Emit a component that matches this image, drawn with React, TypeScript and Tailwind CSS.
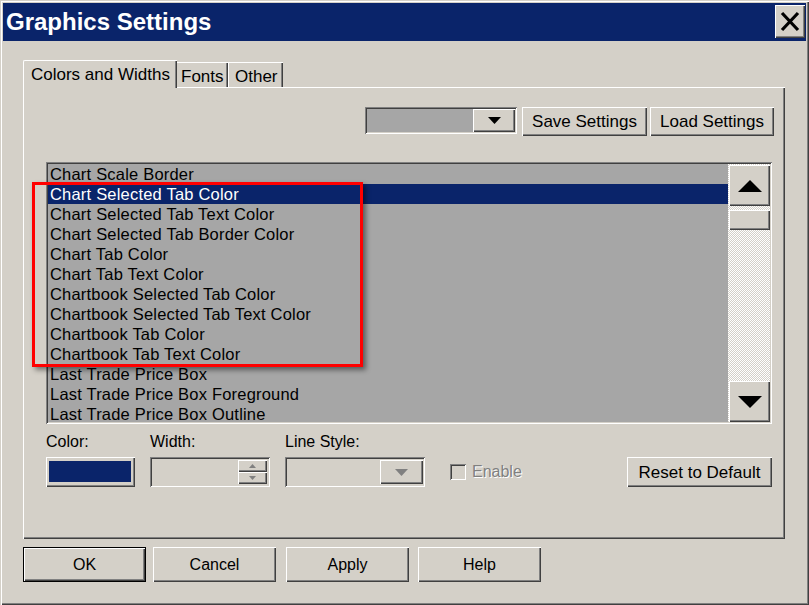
import React from "react";

const raised =
  "shadow-[inset_1px_1px_#ffffff,inset_-1px_-1px_#404040,inset_-2px_-2px_#808080]";
const sunken =
  "shadow-[inset_1px_1px_#808080,inset_-1px_-1px_#ffffff,inset_2px_2px_#404040,inset_-2px_-2px_#d4d0c8]";

const items = [
  "Chart Scale Border",
  "Chart Selected Tab Color",
  "Chart Selected Tab Text Color",
  "Chart Selected Tab Border Color",
  "Chart Tab Color",
  "Chart Tab Text Color",
  "Chartbook Selected Tab Color",
  "Chartbook Selected Tab Text Color",
  "Chartbook Tab Color",
  "Chartbook Tab Text Color",
  "Last Trade Price Box",
  "Last Trade Price Box Foreground",
  "Last Trade Price Box Outline",
];

function Btn({
  children,
  className = "",
}: {
  children: React.ReactNode;
  className?: string;
}) {
  return (
    <div
      className={`flex items-center justify-center bg-[#d4d0c8] text-black ${raised} ${className}`}
    >
      {children}
    </div>
  );
}

export default function App() {
  return (
    <div className="relative w-[809px] h-[605px] overflow-hidden bg-[#d4d0c8] font-['Liberation_Sans',Arial,sans-serif] text-black shadow-[inset_1px_1px_#d4d0c8,inset_2px_2px_#ffffff,inset_-1px_-1px_#404040,inset_-2px_-2px_#808080]">
      {/* Title bar */}
      <div className="mx-[3px] mt-[3px] h-[38px] bg-[#0a246a] flex items-center justify-between">
        <div className="pl-[3px] text-white font-bold text-[24px] leading-none tracking-[0px]">
          Graphics Settings
        </div>
        <div
          className={`mr-[1px] mt-[-1px] w-[30px] h-[33px] bg-[#d4d0c8] flex items-center justify-center ${raised}`}
        >
          <svg width="20" height="21" viewBox="0 0 20 21">
            <path
              d="M2 2 L18 19 M18 2 L2 19"
              stroke="#000"
              strokeWidth="3.2"
              fill="none"
            />
          </svg>
        </div>
      </div>

      {/* Tabs */}
      <div className="ml-[23px] mt-[19px] h-[27px] flex items-end text-[17px] leading-none">
        <div className="relative z-10 -mb-px h-[28px] w-[154px] bg-[#d4d0c8] border-l border-t border-white rounded-tl-[2px] shadow-[inset_-1px_0_#404040,inset_-2px_0_#808080] flex items-start pt-[5px] pl-[7px]">
          Colors and Widths
        </div>
        <div className="h-[25px] w-[51px] bg-[#d4d0c8] border-t border-white shadow-[inset_-1px_0_#404040,inset_-2px_0_#808080] flex items-center pl-[4px] pt-[2px]">
          Fonts
        </div>
        <div className="h-[25px] w-[55px] bg-[#d4d0c8] border-t border-l border-white shadow-[inset_-1px_0_#404040,inset_-2px_0_#808080] flex items-center pl-[6px] pt-[2px]">
          Other
        </div>
      </div>

      {/* Panel */}
      <div
        className={`ml-[23px] w-[762px] h-[452px] bg-[#d4d0c8] ${raised} flex flex-col`}
      >
        {/* top row */}
        <div className="mt-[20px] mr-[11px] flex justify-end items-start">
          <div className={`w-[152px] h-[27px] bg-[#a6a6a6] ${sunken} flex justify-end p-[2px]`}>
            <div className={`w-[42px] h-[23px] bg-[#d4d0c8] ${raised} flex items-center justify-center`}>
              <svg width="13" height="7" viewBox="0 0 13 7">
                <path d="M0 0 H13 L6.5 7 Z" fill="#000" />
              </svg>
            </div>
          </div>
          <Btn className="ml-[5px] w-[125px] h-[29px] text-[17px]">Save Settings</Btn>
          <Btn className="ml-[3px] w-[124px] h-[29px] text-[17px]">Load Settings</Btn>
        </div>

        {/* list */}
        <div className="ml-[23px] mt-[26px] w-[726px] h-[262px] flex flex-col">
          <div className={`w-full h-full bg-[#a6a6a6] ${sunken} p-[2px] flex`}>
            <div className="flex-1 overflow-hidden">
              {items.map((t, i) => (
                <div
                  key={t}
                  className={`h-[20px] flex items-center pl-[2px] text-[16.5px] tracking-[0.2px] leading-none whitespace-nowrap ${
                    i === 1 ? "bg-[#0a246a] text-white" : "text-black"
                  }`}
                >
                  {t}
                </div>
              ))}
            </div>
            <div className="w-[42px] flex flex-col bg-[repeating-conic-gradient(#d4d0c8_0%_25%,#ffffff_0%_50%)] bg-[length:2px_2px]">
              <div className={`h-[41px] ml-[1px] mt-[1px] bg-[#d4d0c8] ${raised} flex items-center justify-center`}>
                <svg width="24" height="12" viewBox="0 0 24 12">
                  <path d="M12 0 L24 12 H0 Z" fill="#000" />
                </svg>
              </div>
              <div className={`h-[20px] ml-[1px] mt-[4px] bg-[#d4d0c8] ${raised}`} />
              <div className="flex-1" />
              <div className={`h-[41px] ml-[1px] bg-[#d4d0c8] ${raised} flex items-center justify-center`}>
                <svg width="24" height="12" viewBox="0 0 24 12">
                  <path d="M0 0 H24 L12 12 Z" fill="#000" />
                </svg>
              </div>
            </div>
          </div>
        </div>

        {/* bottom controls */}
        <div className="ml-[23px] mt-[10px] w-[726px] flex items-end text-[16px] leading-none">
          <div className="flex flex-col">
            <div className="h-[16px] mb-[7px]">Color:</div>
            <div className={`w-[89px] h-[30px] bg-[#d4d0c8] ${raised} p-[4px_4px_5px_3px]`}>
              <div className="w-full h-full bg-[#0a246a]" />
            </div>
          </div>
          <div className="ml-[15px] flex flex-col">
            <div className="h-[16px] mb-[7px]">Width:</div>
            <div className={`w-[120px] h-[30px] bg-[#d4d0c8] ${sunken} flex justify-end items-center pr-[3px]`}>
              <div className="w-[29px] flex flex-col">
                <div className={`h-[12px] bg-[#d4d0c8] ${raised} flex items-center justify-center`}>
                  <svg width="7" height="4" viewBox="0 0 7 4">
                    <path d="M3.5 0 L7 4 H0 Z" fill="#808080" />
                  </svg>
                </div>
                <div className={`h-[12px] bg-[#d4d0c8] ${raised} flex items-center justify-center`}>
                  <svg width="7" height="4" viewBox="0 0 7 4">
                    <path d="M0 0 H7 L3.5 4 Z" fill="#808080" />
                  </svg>
                </div>
              </div>
            </div>
          </div>
          <div className="ml-[15px] flex flex-col">
            <div className="h-[16px] mb-[7px]">Line Style:</div>
            <div className={`w-[140px] h-[30px] bg-[#d4d0c8] ${sunken} flex justify-end items-center pr-[2px]`}>
              <div className={`w-[43px] h-[24px] bg-[#d4d0c8] ${raised} flex items-center justify-center`}>
                <svg width="13" height="7" viewBox="0 0 13 7">
                  <path d="M0 0 H13 L6.5 7 Z" fill="#808080" />
                </svg>
              </div>
            </div>
          </div>
          <div className="ml-[25px] h-[30px] flex items-center">
            <div className={`w-[16px] h-[16px] bg-[#d4d0c8] ${sunken}`} />
            <span className="ml-[6px] text-[16px] text-[#808080] [text-shadow:1px_1px_#ffffff]">
              Enable
            </span>
          </div>
          <Btn className="ml-auto w-[145px] h-[30px] text-[17px]">Reset to Default</Btn>
        </div>
      </div>

      {/* bottom buttons */}
      <div className="ml-[23px] mt-[8px] flex text-[16px]">
        <div className="w-[123px] h-[35px] border border-black">
          <Btn className="w-full h-full">OK</Btn>
        </div>
        <Btn className="ml-[7px] w-[123px] h-[35px]">Cancel</Btn>
        <Btn className="ml-[10px] w-[123px] h-[35px]">Apply</Btn>
        <Btn className="ml-[9px] w-[123px] h-[35px]">Help</Btn>
      </div>

      {/* annotation highlight */}
      <div className="absolute left-[32px] top-[182px] w-[331px] h-[185px] border-[3px] border-[#ff0000] shadow-[3px_3px_5px_rgba(0,0,0,0.45)] pointer-events-none" />
    </div>
  );
}
